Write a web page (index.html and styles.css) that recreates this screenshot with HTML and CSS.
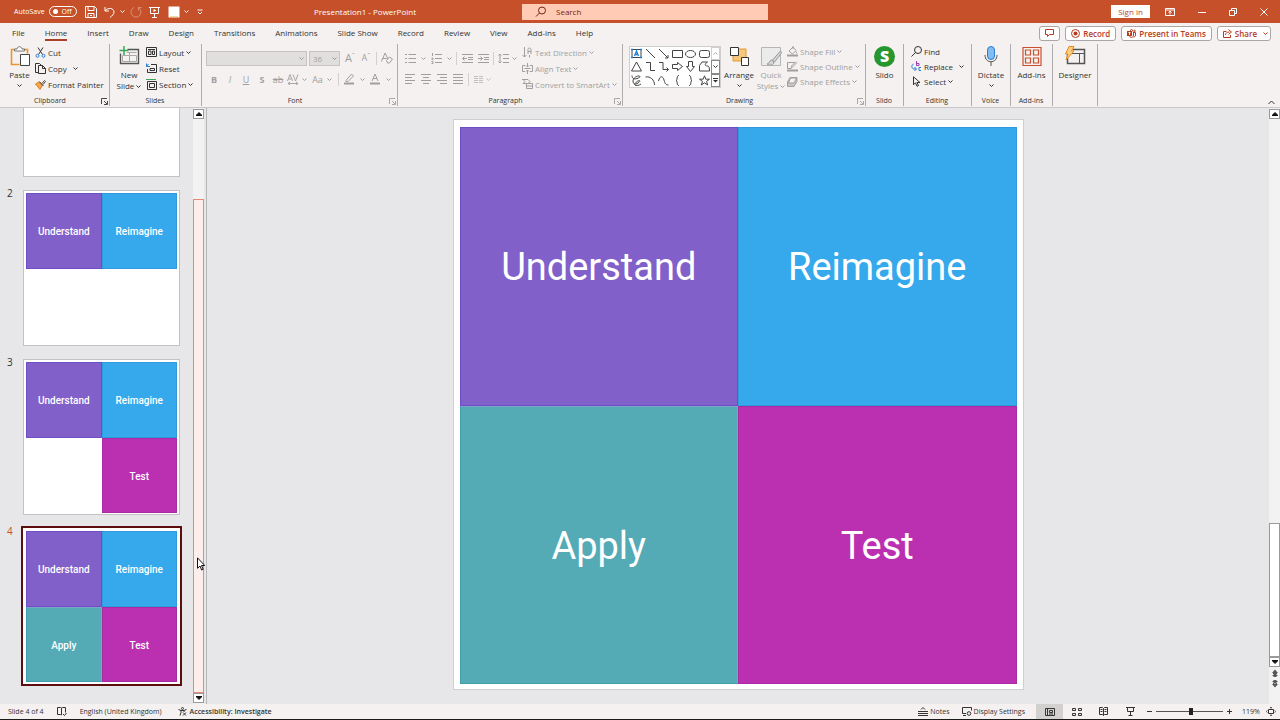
FILE: index.html
```
<!DOCTYPE html>
<html lang="en">

<head>
    <meta charset="UTF-8">
    <meta name="viewport" content="width=device-width, initial-scale=1.0">
    <title>Presentation1 - PowerPoint</title>
    <link rel="stylesheet" href="styles.css">
</head>

<body>
    <svg class="sprite" aria-hidden="true">
        <symbol id="chev" viewBox="0 0 5 5"><path d="M.5 1.5l2 2 2-2" fill="none" stroke="currentColor"/></symbol>
        <symbol id="launch" viewBox="0 0 7 7"><path d="M.5 6V.5H6M3 3l3 3M6.5 3v3.500H3" fill="none" stroke="currentColor" stroke-width=".9"/></symbol>
        <symbol id="up" viewBox="0 0 6 4"><path d="M0 3.500L3 .5l3 3z" fill="currentColor"/></symbol>
        <symbol id="down" viewBox="0 0 6 4"><path d="M0 .5l3 3 3-3z" fill="currentColor"/></symbol>
    </svg>

    <header class="titlebar">
        <div class="quick">
            <label class="autosave">AutoSave <span class="switch"><input type="checkbox">Off</span></label>
            <button aria-label="Save"><svg width="12" height="12" viewBox="0 0 12 12"><path d="M.5.5h9l2 2v9H.5zM3 .5v4h6v-4M3 11.500v-4h6v4M5 9.500h2"/></svg></button>
            <button aria-label="Undo" class="wide"><svg width="12" height="12" viewBox="0 0 12 12"><path d="M1 1v4h4M1 5c3-4 9-3 9 1 0 2-2 4-4 5.500"/></svg><svg width="5" height="5"><use href="#chev"/></svg></button>
            <button aria-label="Redo" class="faded"><svg width="12" height="12" viewBox="0 0 12 12"><path d="M8 1.500a5 5 0 1 1-4 0M8.500 4.500v-3h3"/></svg></button>
            <button aria-label="Start from beginning"><svg width="12" height="12" viewBox="0 0 12 12"><path d="M0 1.500h11M1.500 1.500v6h8v-6M5.500 7.500v4M3 11.500h5"/><path d="M4.500 3l3 1.500-3 1.500z" class="solid"/></svg></button>
            <button aria-label="Fill colour" class="wide"><svg width="12" height="12" viewBox="0 0 12 12"><path d="M.5.5h11v11H.5z" class="solid"/><path d="M2 10.500h8" stroke="#f0dc9a"/></svg><svg width="5" height="5"><use href="#chev"/></svg></button>
            <button aria-label="Customize toolbar"><svg width="6" height="6" viewBox="0 0 6 6"><path d="M.5 1h5M1 3l2 2 2-2"/></svg></button>
            <h1>Presentation1 - PowerPoint</h1>
        </div>
        <label class="search">
            <svg width="12" height="12" viewBox="0 0 12 12"><circle cx="7" cy="4.500" r="3.500"/><path d="M4.500 7L1 10.500"/></svg>
            <input type="search" placeholder="Search" aria-label="Search">
        </label>
        <div class="window">
            <button class="signin">Sign in</button>
            <button aria-label="Ribbon display options"><svg width="10" height="8" viewBox="0 0 10 8"><path d="M.5.5h9v7h-9zM.5 2h9M5 6.500v-3M3.500 4.500L5 3.200l1.500 1.300"/></svg></button>
            <button aria-label="Minimize"><svg width="8" height="8" viewBox="0 0 8 8"><path d="M0 4.500h8"/></svg></button>
            <button aria-label="Restore"><svg width="8" height="8" viewBox="0 0 8 8"><path d="M.5 2.500h5v5h-5zM2.500 2.500v-2h5v5h-2"/></svg></button>
            <button aria-label="Close"><svg width="8" height="8" viewBox="0 0 8 8"><path d="M.5.500l7 7M7.500.500l-7 7"/></svg></button>
        </div>
    </header>

    <nav class="tabs">
        <a href="#">File</a>
        <a href="#" class="active">Home</a>
        <a href="#">Insert</a>
        <a href="#">Draw</a>
        <a href="#">Design</a>
        <a href="#">Transitions</a>
        <a href="#">Animations</a>
        <a href="#">Slide Show</a>
        <a href="#">Record</a>
        <a href="#">Review</a>
        <a href="#">View</a>
        <a href="#">Add-ins</a>
        <a href="#">Help</a>
        <div class="actions">
            <button aria-label="Comments"><svg width="9" height="8" viewBox="0 0 9 8"><path d="M.5.500h8v5h-4l-2 2v-2h-2z"/></svg></button>
            <button><svg width="9" height="9" viewBox="0 0 9 9"><circle cx="4.500" cy="4.500" r="4"/><circle cx="4.500" cy="4.500" r="2" class="solid"/></svg>Record</button>
            <button><svg width="9" height="9" viewBox="0 0 9 9"><path d="M0 2h5v5H0z" class="solid"/><path d="M1.500 3.500h2M2.500 3.500V6" stroke="#fff"/><circle cx="4.500" cy="1.500" r="1"/><circle cx="7.500" cy="2" r=".8"/><path d="M6 3.500h2.500V6c0 1.500-1 2-2 2M2.500 7c.5 2 4 2 4-1V3.500"/></svg>Present in Teams</button>
            <button><svg width="9" height="9" viewBox="0 0 9 9"><path d="M3.500 2.500h-3v6h7V6M2.500 6c0-2 1.500-3 4-3M5.500.500L8.500 3l-3 2.500"/></svg>Share<svg class="split" width="5" height="5"><use href="#chev"/></svg></button>
        </div>
    </nav>

    <div class="ribbon">
        <section class="group clipboard">
            <div class="tools">
                <button class="big"><svg width="22" height="22" viewBox="0 0 22 22"><path d="M7 4.500H2.500v15h8M14 4.500h4.500v4" stroke="#e8962e" stroke-width="1.600"/><path d="M5.500 6V4H8c0-3 5-3 5 0h2.500v2z" fill="#fff" stroke="#777"/><path d="M11.500 9.500h9v11h-9z" fill="#fff" stroke="#444"/></svg>Paste<svg width="5" height="5"><use href="#chev"/></svg></button>
                <div class="rows">
                    <button><svg width="11" height="11" viewBox="0 0 11 11"><path d="M3 .5l4.500 7M8 .5l-4.500 7"/><circle cx="2.500" cy="8.800" r="1.500" stroke="#2b7cd3"/><circle cx="8.500" cy="8.800" r="1.500" stroke="#2b7cd3"/></svg>Cut</button>
                    <button><svg width="11" height="11" viewBox="0 0 11 11"><path d="M3 9.500H.5V.500h4l1.500 1.500M3.500 2.500h4l3 3v5h-7zM7.500 2.500v3h3"/></svg>Copy<svg class="far" width="5" height="5"><use href="#chev"/></svg></button>
                    <button><svg width="11" height="11" viewBox="0 0 11 11"><path d="M.5 5l4-2.500 3 3.500-2.500 4.500z" fill="#f3a64a" stroke="#dd8123"/><path d="M4.500 3l4 4M7 4.500L9.500 1.500l1 1L8 5.500" stroke="#444"/></svg>Format Painter</button>
                </div>
            </div>
            <footer><h2>Clipboard</h2><button aria-label="Clipboard options"><svg width="7" height="7"><use href="#launch"/></svg></button></footer>
        </section>

        <section class="group slides">
            <div class="tools">
                <button class="big"><svg width="22" height="22" viewBox="0 0 22 22"><path d="M2.500 8.500v10h18v-14h-11" stroke="#555" fill="none" stroke-width="1.400"/><path d="M9 7.500h9.500M4.500 10.500h14v6h-14zM11.500 8v8.500" stroke="#aaa"/><path d="M6 1v9M1.500 5.500h9" stroke="#3aa757" stroke-width="1.500"/></svg>New<span>Slide <svg width="5" height="5"><use href="#chev"/></svg></span></button>
                <div class="rows">
                    <button><svg width="11" height="10" viewBox="0 0 11 10"><path d="M.5.500h10v9H.5zM2 2.500h7M2.500 4v3.500h2.500V4zM6.500 4v3.500h2V4z"/></svg>Layout<svg width="5" height="5"><use href="#chev"/></svg></button>
                    <button><svg width="11" height="10" viewBox="0 0 11 10"><path d="M5 1.500h5.500v8h-9V6M4 5.500h4.500v2H4z"/><path d="M.5 3.500l2-2.500M.5 3.500H4M.5 3.500V.500" stroke="#2b7cd3"/></svg>Reset</button>
                    <button><svg width="11" height="11" viewBox="0 0 11 11"><path d="M0 .5h10" stroke="#3aa757"/><path d="M1.500 2.500h9v8h-9zM3.500 4.500h5v4h-5z"/></svg>Section<svg width="5" height="5"><use href="#chev"/></svg></button>
                </div>
            </div>
            <footer><h2>Slides</h2></footer>
        </section>

        <section class="group font">
            <div class="lines off">
                <div class="line">
                    <select class="face" aria-label="Font" disabled><option></option></select>
                    <select class="size" aria-label="Font size" disabled><option>36</option></select>
                    <button disabled class="grow">A<sup>ˆ</sup></button>
                    <button disabled class="grow small">A<sup>ˇ</sup></button>
                    <i class="bar"></i>
                    <button disabled aria-label="Clear formatting"><svg width="12" height="12" viewBox="0 0 12 12"><path d="M.5 9.500L4 1l3 6M1.500 6.500h4M5.500 8.500l3-3.500 3 2-3 4h-2z"/></svg></button>
                </div>
                <div class="line letters">
                    <button disabled><b>B</b></button>
                    <button disabled><em>I</em></button>
                    <button disabled><u>U</u></button>
                    <button disabled><b>S</b></button>
                    <button disabled><s>ab</s></button>
                    <button disabled class="mid" aria-label="Character spacing"><svg width="12" height="11" viewBox="0 0 12 11"><path d="M.5 7L3 .5 5.500 7M1.500 5h3M6 .5L8.500 7 11 .5M1 9.500h10M3 8L1 9.500 3 11M9 8l2 1.500L9 11" stroke-width=".9"/></svg><svg width="5" height="5"><use href="#chev"/></svg></button>
                    <button disabled class="case">Aa<svg width="5" height="5"><use href="#chev"/></svg></button>
                    <i class="bar"></i>
                    <button disabled class="pick" aria-label="Highlight"><svg width="12" height="12" viewBox="0 0 12 12"><path d="M3 7.500l5.500-6.500 2 2L5 8.500H3z"/><path d="M1 10.500h10" stroke-width="2"/></svg><svg width="5" height="5"><use href="#chev"/></svg></button>
                    <button disabled class="pick" aria-label="Font colour"><svg width="12" height="12" viewBox="0 0 12 12"><path d="M3 8l3-7 3 7M4 5.500h4"/><path d="M1 10.500h10" stroke-width="2"/></svg><svg width="5" height="5"><use href="#chev"/></svg></button>
                </div>
            </div>
            <footer class="off"><h2>Font</h2><button aria-label="Font options"><svg width="7" height="7"><use href="#launch"/></svg></button></footer>
        </section>

        <section class="group paragraph">
            <div class="tools off">
                <div class="lines">
                    <div class="line">
                        <button disabled class="pick" aria-label="Bullets"><svg width="11" height="11" viewBox="0 0 11 11"><path d="M3.500 1.500H11M3.500 5.500H11M3.500 9.500H11M0 1.500h2M0 5.500h2M0 9.500h2"/></svg><svg width="5" height="5"><use href="#chev"/></svg></button>
                        <button disabled class="pick" aria-label="Numbering"><svg width="11" height="11" viewBox="0 0 11 11"><path d="M4 1.500h7M4 5.500h7M4 9.500h7M1.500 0v3M.5 5h1.500v1.500H.5M.5 8.500h1.500v2H.5"/></svg><svg width="5" height="5"><use href="#chev"/></svg></button>
                        <i class="bar"></i>
                        <button disabled aria-label="Decrease indent"><svg width="11" height="9" viewBox="0 0 11 9"><path d="M0 .5h11M6 3.500h5M6 5.500h5M0 8.500h11M5 4.500H.5M2.500 2.500l-2 2 2 2"/></svg></button>
                        <button disabled aria-label="Increase indent"><svg width="11" height="9" viewBox="0 0 11 9"><path d="M0 .5h11M6 3.500h5M6 5.500h5M0 8.500h11M0 4.500h4.500M2.500 2.500l2 2-2 2"/></svg></button>
                        <i class="bar"></i>
                        <button disabled class="mid" aria-label="Line spacing"><svg width="11" height="11" viewBox="0 0 11 11"><path d="M5 1.500h6M5 5.500h6M5 9.500h6M2 1v9M.5 2.500L2 1l1.500 1.500M.5 8.500L2 10l1.500-1.500"/></svg><svg width="5" height="5"><use href="#chev"/></svg></button>
                    </div>
                    <div class="line">
                        <button disabled aria-label="Align left"><svg width="11" height="10" viewBox="0 0 11 10"><path d="M0 .5h10M0 3.500h7M0 6.500h10M0 9.500h7"/></svg></button>
                        <button disabled aria-label="Centre"><svg width="11" height="10" viewBox="0 0 11 10"><path d="M0 .5h10M2 3.500h6M0 6.500h10M2 9.500h6"/></svg></button>
                        <button disabled aria-label="Align right"><svg width="11" height="10" viewBox="0 0 11 10"><path d="M0 .5h10M3 3.500h7M0 6.500h10M3 9.500h7"/></svg></button>
                        <button disabled aria-label="Justify"><svg width="11" height="10" viewBox="0 0 11 10"><path d="M0 .5h10M0 3.500h10M0 6.500h10M0 9.500h10"/></svg></button>
                        <i class="bar"></i>
                        <button disabled class="mid pale" aria-label="Columns"><svg width="9" height="7" viewBox="0 0 9 7"><path d="M0 .5h4M5 .5h4M0 2.500h4M5 2.500h4M0 4.500h4M5 4.500h4M0 6.500h4M5 6.500h4"/></svg><svg width="5" height="5"><use href="#chev"/></svg></button>
                    </div>
                </div>
                <div class="rows">
                    <button disabled><svg width="11" height="11" viewBox="0 0 11 11"><path d="M2.500 0v10M.5 8l2 2 2-2M6 7V2.500c0-2 3-2 3 0V7M6 4.500h3M7.500 8v2.500"/></svg>Text Direction<svg width="5" height="5"><use href="#chev"/></svg></button>
                    <button disabled><svg width="11" height="11" viewBox="0 0 11 11"><path d="M3 2.500H.5v6H3M8 2.500h2.500v6H8M5.500 0v4M4 2.500l1.500 1.500L7 2.500M5.500 11V7M4 8.500L5.500 7 7 8.500M2.500 5.500h6"/></svg>Align Text<svg width="5" height="5"><use href="#chev"/></svg></button>
                    <button disabled><svg width="11" height="10" viewBox="0 0 11 10"><path d="M0 .5h6l2 2-2 2H1l2-2-2-2M4.500 4.500h6v5h-6zM4.500 7h6"/></svg>Convert to SmartArt<svg width="5" height="5"><use href="#chev"/></svg></button>
                </div>
            </div>
            <footer class="off"><h2>Paragraph</h2><button aria-label="Paragraph options"><svg width="7" height="7"><use href="#launch"/></svg></button></footer>
        </section>

        <section class="group drawing">
            <div class="tools">
                <div class="gallery">
                    <div class="shapes">
                        <button aria-label="Text box"><svg width="11" height="11" viewBox="0 0 11 11"><path d="M1 1.500h9v8H1z"/><path d="M3.500 8L5.500 3l2 5M4.200 6.500h2.600M0 1.500h2M9 1.500h2M0 9.500h2M9 9.500h2" stroke="#1b7fd6" stroke-width="1.300"/></svg></button>
                        <button aria-label="Line"><svg width="11" height="11" viewBox="0 0 11 11"><path d="M1 1l9 9"/></svg></button>
                        <button aria-label="Arrow"><svg width="11" height="11" viewBox="0 0 11 11"><path d="M1 1l9 9M10 7v3H7"/></svg></button>
                        <button aria-label="Rectangle"><svg width="11" height="11" viewBox="0 0 11 11"><path d="M.5 2.500h10v7H.5z"/></svg></button>
                        <button aria-label="Oval"><svg width="11" height="11" viewBox="0 0 11 11"><ellipse cx="5.500" cy="6" rx="5" ry="3.500"/></svg></button>
                        <button aria-label="Rounded rectangle"><svg width="11" height="11" viewBox="0 0 11 11"><rect x=".5" y="2.500" width="10" height="7" rx="2"/></svg></button>
                        <button aria-label="Triangle"><svg width="11" height="11" viewBox="0 0 11 11"><path d="M5.500 1l5 9H.5z"/></svg></button>
                        <button aria-label="Elbow"><svg width="11" height="11" viewBox="0 0 11 11"><path d="M1 1.500h4.500v8H10"/></svg></button>
                        <button aria-label="Elbow arrow"><svg width="11" height="11" viewBox="0 0 11 11"><path d="M1 1.500h4v7h5.500M8.500 6.500l2 2-2 2"/></svg></button>
                        <button aria-label="Right arrow"><svg width="11" height="11" viewBox="0 0 11 11"><path d="M.5 3.500h5v-2l5 4-5 4v-2h-5z"/></svg></button>
                        <button aria-label="Down arrow"><svg width="11" height="11" viewBox="0 0 11 11"><path d="M3.500.500v5h-2l4 5 4-5h-2v-5z"/></svg></button>
                        <button aria-label="Freeform"><svg width="11" height="11" viewBox="0 0 11 11"><path d="M.5 10V4.500L3 1h5.500c-3 2-3 4 0 4 1.500 0 2 2 2 5z"/></svg></button>
                        <button aria-label="Scribble"><svg width="11" height="11" viewBox="0 0 11 11"><path d="M1 .5c0 3 2 4 5 3s4-2 2-2.500S2 3 2 6s2 4 5 2 2-3 0-2-4 3-3 4 4 .5 6-1"/></svg></button>
                        <button aria-label="Arc"><svg width="11" height="11" viewBox="0 0 11 11"><path d="M.5 2c5-1 9 3 9 8"/></svg></button>
                        <button aria-label="Curve"><svg width="11" height="11" viewBox="0 0 11 11"><path d="M.5 6C2 0 5 1 6 5s2 5 4.500 5"/></svg></button>
                        <button aria-label="Left brace"><svg width="11" height="11" viewBox="0 0 11 11"><path d="M7 .5C4 .5 6 5.500 4 5.500c2 0 0 5 3 5"/></svg></button>
                        <button aria-label="Right brace"><svg width="11" height="11" viewBox="0 0 11 11"><path d="M4 .5c3 0 1 5 3 5-2 0 0 5-3 5"/></svg></button>
                        <button aria-label="Star"><svg width="11" height="11" viewBox="0 0 11 11"><path d="M5.500.8l1.300 3.400h3.700L7.500 6.400l1.200 3.600-3.200-2.200L2.300 10l1.200-3.600L.5 4.200h3.700z"/></svg></button>
                    </div>
                    <div class="scrolls">
                        <button class="dim" aria-label="Previous row"><svg width="5" height="5" viewBox="0 0 5 5"><path d="M.5 3.500l2-2 2 2"/></svg></button>
                        <button aria-label="Next row"><svg width="5" height="5"><use href="#chev"/></svg></button>
                        <button aria-label="More shapes"><svg width="5" height="5" viewBox="0 0 5 5"><path d="M0 .5h5"/><path d="M0 2l2.500 2.500L5 2z" class="solid"/></svg></button>
                    </div>
                </div>
                <button class="big arrange"><svg width="22" height="22" viewBox="0 0 22 22"><path d="M5 4h13v12H5z" fill="#f8c77e" stroke="#e8962e"/><path d="M2.500 2.500h8v8h-8zM13.500 12.500h7v8h-7z" fill="#fff" stroke="#333"/></svg>Arrange<svg width="5" height="5"><use href="#chev"/></svg></button>
                <button class="big dim" disabled><svg width="22" height="22" viewBox="0 0 22 22"><path d="M1.500 2.500h19v18h-19z" fill="#ebebeb" stroke="#b5b5b5"/><path d="M20.500 6l-8 9M20.500 6l1 2-7 9-2-2M12 15c-3 0-2 4-5 4 3 2 7 1 7-2z" fill="#d5d5d5" stroke="#999"/></svg>Quick<span>Styles <svg width="5" height="5"><use href="#chev"/></svg></span></button>
                <div class="rows tight off">
                    <button disabled><svg width="11" height="11" viewBox="0 0 11 11"><path d="M2 5l4-4 3 3.500L5.500 8zM9 5.500l1 2M6 0v3"/><path d="M0 9.500h11" stroke-width="2"/></svg>Shape Fill<svg width="5" height="5"><use href="#chev"/></svg></button>
                    <button disabled><svg width="11" height="11" viewBox="0 0 11 11"><path d="M8 1.500H.5v6H4M4 7.500l6-6M4 7.500l1-3 4-4"/><path d="M0 9.500h11" stroke-width="2"/></svg>Shape Outline<svg width="5" height="5"><use href="#chev"/></svg></button>
                    <button disabled><svg width="11" height="10" viewBox="0 0 11 10"><path d="M3 .5h7v4l-3 5H.5V5z" fill="#c5c5c5"/><path d="M3.500 1h6L7 6H1.500z" fill="#f4f2f1"/></svg>Shape Effects<svg width="5" height="5"><use href="#chev"/></svg></button>
                </div>
            </div>
            <footer class="off"><h2>Drawing</h2><button aria-label="Drawing options"><svg width="7" height="7"><use href="#launch"/></svg></button></footer>
        </section>

        <section class="group slido">
            <button class="big"><span class="slido-logo">S</span>Slido</button>
            <footer><h2>Slido</h2></footer>
        </section>

        <section class="group editing">
            <div class="rows tight">
                <button><svg width="11" height="11" viewBox="0 0 11 11"><circle cx="7" cy="4" r="3.500"/><path d="M4.500 6.500L.5 10.500"/></svg>Find</button>
                <button><svg width="11" height="11" viewBox="0 0 11 11"><path d="M5.500 0v4.500h2.500v-2H5.500" stroke="#a33bb5"/><path d="M10 6.500H8v3h2M2.500 3C0 4 .5 8 3 8h2M3.500 6L5.500 8l-2 2" stroke="#2b7cd3"/></svg>Replace<svg class="far" width="5" height="5"><use href="#chev"/></svg></button>
                <button><svg width="11" height="11" viewBox="0 0 11 11"><path d="M2.500.800v8l2-2 1.500 3.500 1.500-.8L6 6.500h3z"/></svg>Select<svg width="5" height="5"><use href="#chev"/></svg></button>
            </div>
            <footer><h2>Editing</h2></footer>
        </section>

        <section class="group voice">
            <button class="big"><svg width="22" height="22" viewBox="0 0 22 22"><path d="M5 10c0 9 12 9 12 0M11 17v4" stroke="#555"/><rect x="7.500" y="1.500" width="7" height="13" rx="3.500" fill="#83bdf0" stroke="#2b7cd3"/></svg>Dictate<svg width="5" height="5"><use href="#chev"/></svg></button>
            <footer><h2>Voice</h2></footer>
        </section>

        <section class="group addins">
            <button class="big"><svg width="22" height="22" viewBox="0 0 22 22"><path d="M2 2.500h18v18H2zM4.500 5h5v5h-5zM12.500 5h5v5h-5zM4.500 13h5v5h-5zM12.500 13h5v5h-5z" stroke="#c9502c" stroke-width="1.200"/></svg>Add-ins</button>
            <footer><h2>Add-ins</h2></footer>
        </section>

        <section class="group designer">
            <button class="big"><svg width="22" height="22" viewBox="0 0 22 22"><path d="M3.500 9v9.500h17v-14H9" stroke="#555" stroke-width="1.500"/><path d="M8 8.500h12M15.500 9v9" stroke="#555"/><path d="M5 1.500h5L7.500 6H10l-8 9 2-6H1.500z" fill="#fbcf7e" stroke="#e58a1f"/></svg>Designer</button>
            <footer></footer>
        </section>

        <button class="collapse" aria-label="Collapse ribbon"><svg width="7" height="5" viewBox="0 0 7 5"><path d="M.5 4l3-3 3 3"/></svg></button>
    </div>

    <main>
        <aside class="panel">
            <ol class="thumbs">
                <li><span></span><div class="thumb"></div></li>
                <li><span>2</span>
                    <div class="thumb">
                        <div class="tile understand">Understand</div>
                        <div class="tile reimagine">Reimagine</div>
                    </div>
                </li>
                <li><span>3</span>
                    <div class="thumb">
                        <div class="tile understand">Understand</div>
                        <div class="tile reimagine">Reimagine</div>
                        <div class="tile test">Test</div>
                    </div>
                </li>
                <li class="selected"><span>4</span>
                    <div class="thumb">
                        <div class="tile understand">Understand</div>
                        <div class="tile reimagine">Reimagine</div>
                        <div class="tile apply">Apply</div>
                        <div class="tile test">Test</div>
                    </div>
                </li>
            </ol>
            <div class="scroll red">
                <button aria-label="Scroll up"><svg width="6" height="4"><use href="#up"/></svg></button>
                <div class="track"><div class="handle"></div></div>
                <button aria-label="Scroll down"><svg width="6" height="4"><use href="#down"/></svg></button>
            </div>
            <svg class="cursor" width="8" height="14" viewBox="0 0 8 14"><path d="M.5.800v10.500L3 9l1.600 4 1.600-.7L4.500 8.500h3.200z" fill="#fff" stroke="#111"/></svg>
        </aside>

        <div class="stage">
            <div class="slide">
                <div class="tile understand">Understand</div>
                <div class="tile reimagine">Reimagine</div>
                <div class="tile apply">Apply</div>
                <div class="tile test">Test</div>
            </div>
        </div>

        <div class="scroll right">
            <button aria-label="Scroll up"><svg width="6" height="4"><use href="#up"/></svg></button>
            <div class="track"><div class="handle"></div></div>
            <button aria-label="Scroll down"><svg width="6" height="4"><use href="#down"/></svg></button>
            <button class="jump" aria-label="Previous slide"><svg width="6" height="8" viewBox="0 0 6 8"><path d="M0 4l3-3.500L6 4zM1 4h4v1H1zM0 7l3-3 3 3zM1.500 7h3v1h-3z" class="solid"/></svg></button>
            <button class="jump" aria-label="Next slide"><svg width="6" height="8" viewBox="0 0 6 8"><path d="M0 4l3 3.500L6 4zM1 3h4v1H1zM0 1l3 3 3-3zM1.500 0h3v1h-3z" class="solid"/></svg></button>
        </div>
    </main>

    <footer class="status">
        <span>Slide 4 of 4</span>
        <button aria-label="Spelling"><svg width="10" height="9" viewBox="0 0 10 9"><path d="M4.500 8L3.500 7.500h-3v-7h3l1 .5 1-.5h3v5M4.500 1v7M6 7l1.500 1.500L9.500 6"/></svg></button>
        <button>English (United Kingdom)</button>
        <button class="access"><svg width="9" height="9" viewBox="0 0 9 9"><circle cx="4.500" cy="1.500" r="1"/><path d="M.5 2.500l2.500 1v2L2 8.500M8.500 2.500L6 3.500V5M3 3.500h3M5 5.500l3 3M8 5.500l-3 3"/></svg>Accessibility: Investigate</button>
        <div class="views">
            <button><svg width="10" height="9" viewBox="0 0 10 9"><path d="M0 4.500h10M0 6.500h10M0 8.500h10M3 2.500L5 .5l2 2"/></svg>Notes</button>
            <button class="display"><svg width="10" height="9" viewBox="0 0 10 9"><path d="M4 6.500H.5v-6h9v3M1 8.500h3"/><circle cx="7" cy="6.500" r="1.800"/></svg>Display Settings</button>
            <button class="view on" aria-label="Normal"><svg width="10" height="8" viewBox="0 0 10 8"><path d="M.5.500h9v7h-9zM2.500.500v7M4.500 2.500h3v2h-3zM4 6h4"/></svg></button>
            <button class="view" aria-label="Slide sorter"><svg width="10" height="8" viewBox="0 0 10 8"><path d="M.5.500h3v2h-3zM6.500.500h3v2h-3zM.5 5.500h3v2h-3zM6.500 5.500h3v2h-3z"/></svg></button>
            <button class="view" aria-label="Reading view"><svg width="10" height="9" viewBox="0 0 10 9"><path d="M4.500 1.500l-1-1h-3v7h3l1 1 1-1h3v-7h-3zM4.500 1.500v7M1.500 2.500h2M1.500 4.500h2M5.500 2.500h2M5.500 4.500h2"/></svg></button>
            <button class="view" aria-label="Slide show"><svg width="10" height="9" viewBox="0 0 10 9"><path d="M0 .5h9M1.500.500v4h6v-4M4.500 5v3M2.500 8.500h4"/></svg></button>
            <button class="zoom" aria-label="Zoom out"><svg width="5" height="5" viewBox="0 0 5 5"><path d="M0 2.500h5"/></svg></button>
            <input type="range" min="0" max="100" value="53" aria-label="Zoom">
            <button class="zoom" aria-label="Zoom in"><svg width="5" height="5" viewBox="0 0 5 5"><path d="M0 2.500h5M2.500 0v5"/></svg></button>
            <button class="percent">119%</button>
            <button class="fit" aria-label="Fit to window"><svg width="10" height="9" viewBox="0 0 10 9"><path d="M2.500 2.500h5v4h-5zM4 1.200L5 .3l1 .9M4 7.800l1 .9 1-.9M1.200 3.500L.3 4.500l.9 1M8.800 3.500l.9 1-.9 1"/></svg></button>
        </div>
    </footer>
</body>

</html>
```
FILE: styles.css
```
* {
    margin: 0;
    padding: 0;
    box-sizing: border-box;
}

body {
    display: flex;
    flex-direction: column;
    height: 100vh;
    overflow: hidden;
    font-family: "Open Sans", "Noto Sans", sans-serif;
    font-size: 8px;
    color: #333;
    background-color: #f4f1f0;
}

button,
input,
select {
    font: inherit;
    color: inherit;
    background: none;
    border: none;
}

button {
    display: flex;
    align-items: center;
    justify-content: center;
    white-space: nowrap;
}

svg {
    flex: none;
    fill: none;
    stroke: currentColor;
}

svg .solid {
    fill: currentColor;
    stroke: none;
}

.sprite {
    display: none;
}

/* title bar */
.titlebar {
    display: grid;
    grid-template-columns: 522fr 246fr 512fr;
    align-items: center;
    height: 23px;
    color: white;
    background-color: #c5502a;
}

.quick {
    display: flex;
    align-items: center;
    padding-left: 14px;
}

.quick button {
    width: 12px;
    margin-right: 7px;
}

.quick .wide {
    width: 21px;
    gap: 4px;
    margin-right: 5px;
}

.quick .faded {
    opacity: 0.35;
}

.autosave {
    display: flex;
    align-items: center;
    gap: 4px;
    width: 64px;
    margin-right: 7px;
    font-size: 7px;
    font-weight: 500;
    white-space: nowrap;
}

.switch {
    display: flex;
    align-items: center;
    gap: 4px;
    height: 11px;
    padding: 0 4px 0 3px;
    border: 1px solid white;
    border-radius: 6px;
}

.switch input {
    appearance: none;
    width: 5px;
    height: 5px;
    border-radius: 50%;
    background-color: white;
}

h1 {
    margin: 0 106px 0 auto;
    font-size: 8px;
    font-weight: 500;
    white-space: nowrap;
}

.search {
    display: flex;
    align-items: center;
    gap: 9px;
    height: 16px;
    padding-left: 13px;
    color: #7a2410;
    background-color: #ffcbb4;
}

.search input {
    flex: 1;
    min-width: 0;
    outline: none;
}

.search input::placeholder {
    color: #7a2410;
}

.window {
    display: flex;
    align-items: center;
    justify-content: flex-end;
    padding-right: 12px;
}

.window button {
    width: 8px;
    margin-left: 23px;
}

.window .signin {
    width: 39px;
    height: 13px;
    color: #b7472a;
    background-color: white;
}

.window .signin + button {
    width: 10px;
    margin-left: 15px;
}

/* tabs */
.tabs {
    display: flex;
    align-items: center;
    gap: 20px;
    height: 20px;
    padding: 0 9px 0 12px;
}

.tabs a {
    height: 16px;
    line-height: 16px;
    color: #333;
    font-weight: 500;
    text-decoration: none;
    white-space: nowrap;
}

.tabs .active {
    border-bottom: 2px solid #a8402a;
}

.actions {
    display: flex;
    gap: 5px;
    margin-left: auto;
}

.actions button {
    gap: 3px;
    height: 15px;
    padding: 0 5px;
    color: #b83b1d;
    font-weight: 600;
    background-color: white;
    border: 1px solid #a9a6a5;
    border-radius: 3px;
}

.actions .split {
    margin-left: 3px;
    margin-right: -3px;
}

/* ribbon */
.ribbon {
    display: flex;
    height: 65px;
    padding-top: 1px;
    border-bottom: 1px solid #c9c7c7;
}

.group {
    display: flex;
    flex-direction: column;
    justify-content: space-between;
    height: 62px;
    border-right: 1px solid #aeacac;
}

.group footer {
    display: flex;
    align-items: center;
    height: 10px;
    padding-right: 1px;
}

.group footer button {
    width: 8px;
}

.group h2 {
    flex: 1;
    font-size: 7px;
    font-weight: 500;
    line-height: 8px;
    text-align: center;
}

.tools {
    display: flex;
}

.big {
    flex-direction: column;
    justify-content: flex-start;
    line-height: 11px;
    padding-top: 1px;
}

.big > svg:first-child {
    margin-bottom: 2px;
}

.big > svg:last-child:not(:first-child) {
    margin-top: 3px;
}

.big.dim,
.off button,
.off select {
    color: #a19f9e;
}

.rows {
    display: flex;
    flex-direction: column;
    align-items: flex-start;
}

.rows button {
    gap: 2px;
    height: 16px;
}

.rows.tight button {
    height: 15px;
}

.rows .far {
    margin-left: 4px;
}

.lines {
    display: flex;
    flex-direction: column;
    gap: 5px;
    padding-top: 6px;
}

.line {
    display: flex;
    align-items: center;
    height: 16px;
}

.line button {
    width: 16px;
    height: 16px;
}

.line .mid {
    width: 22px;
    gap: 3px;
}

.line .pick {
    width: 26px;
    gap: 5px;
}

.line .case {
    width: 28px;
    gap: 4px;
    font-size: 9px;
}

.line .grow {
    align-items: flex-start;
    font-size: 11px;
    line-height: 16px;
}

.line .grow sup {
    font-size: 8px;
    line-height: 10px;
}

.line .small {
    font-size: 9px;
}

.line .pale {
    opacity: 0.6;
}

.letters {
    font-size: 9px;
}

.bar {
    width: 1px;
    height: 13px;
    margin: 0 2px;
    background-color: #d3d1d0;
}

select {
    appearance: none;
    height: 15px;
    padding-left: 3px;
    border: 1px solid #c6c4c3;
    background: #e1dfde url("data:image/svg+xml,%3Csvg xmlns='http://www.w3.org/2000/svg' width='5' height='5'%3E%3Cpath d='M.5 1.5l2 2 2-2' fill='none' stroke='%23999'/%3E%3C/svg%3E") no-repeat right 2px center;
    opacity: 1;
}

.face {
    width: 101px;
    margin-right: 2px;
}

.size {
    width: 31px;
    margin-right: 2px;
}

.clipboard {
    width: 110px;
}

.clipboard .big {
    width: 27px;
    margin-left: 6px;
    margin-right: 2px;
}

.slides {
    width: 92px;
}

.slides .big {
    width: 34px;
    margin-left: 2px;
}

.font {
    width: 196px;
}

.font .lines {
    padding-left: 4px;
}

.paragraph {
    width: 225px;
}

.paragraph .lines {
    width: 122px;
    padding-left: 4px;
}

.paragraph .rows {
    margin-left: 2px;
}

.drawing {
    width: 243px;
}

.gallery {
    display: flex;
    width: 92px;
    height: 42px;
    margin: 2px 3px 0 6px;
    border: 1px solid #d0cecd;
    background-color: white;
}

.shapes {
    display: grid;
    grid-template-columns: repeat(6, 1fr);
    flex: 1;
    color: #444;
}

.scrolls {
    display: grid;
    width: 9px;
}

.scrolls button {
    border: 1px solid #8b8988;
}

.scrolls .dim {
    color: #aaa;
    border-color: #d0cecd;
}

.arrange {
    width: 30px;
}

.arrange + .big {
    width: 34px;
}

.drawing .rows {
    margin-left: -1px;
}

.slido {
    width: 38px;
}

.slido-logo {
    width: 21px;
    height: 21px;
    margin: 1px 0 2px;
    border-radius: 50%;
    background-color: #27962f;
    color: white;
    font-size: 16px;
    font-weight: 800;
    line-height: 21px;
}

.editing {
    width: 68px;
}

.editing .rows {
    padding-left: 7px;
}

.voice {
    width: 39px;
}

.addins {
    width: 42px;
}

.designer {
    width: 45px;
}

.collapse {
    width: 7px;
    margin: auto 5px 2px auto;
}

/* work area */
main {
    display: flex;
    flex: 1;
    min-height: 0;
    background-color: #e7e6e8;
}

.panel {
    position: relative;
    display: flex;
    width: 207px;
    padding-right: 2px;
    border-right: 1px solid #b9b8b9;
}

.thumbs {
    display: flex;
    flex: 1;
    flex-direction: column;
    justify-content: flex-end;
    gap: 13px;
    padding: 0 0 20px 7px;
    overflow: hidden;
    list-style: none;
}

.thumbs li {
    display: flex;
    flex: none;
}

.thumbs li > span {
    width: 16px;
    margin-top: -4px;
    font-size: 10px;
}

.thumb {
    display: grid;
    grid-template: 1fr 1fr / 1fr 1fr;
    width: 157px;
    height: 156px;
    padding: 2px 2px 1px;
    border: 1px solid #c3c2c4;
    background-color: white;
    font-size: 10px;
    font-weight: 500;
}

.selected > span {
    color: #c5502a;
}

.selected .thumb {
    border-color: white;
    outline: 2px solid #5c0d0d;
}

.tile {
    display: flex;
    align-items: center;
    justify-content: center;
    padding-top: 2px;
    color: white;
    font-family: Roboto, sans-serif;
    border: 1px solid;
}

.understand {
    background-color: #8160ca;
    border-color: #6f4dc4;
}

.reimagine {
    background-color: #35a9ec;
    border-color: #2f9bdd;
}

.apply {
    background-color: #54aab5;
    border-color: #7ba4c8 #7ba4c8 #3fa0ac #3fa0ac;
}

.test {
    grid-column: 2;
    background-color: #ba30b0;
    border-color: #a92aa3;
}

.scroll {
    display: flex;
    flex-direction: column;
    width: 11px;
    padding: 1px 0;
    background-color: #f3f2f3;
    color: #111;
}

.scroll button {
    height: 10px;
    border: 1px solid #999;
    background-color: white;
}

.track {
    display: flex;
    flex: 1;
    flex-direction: column;
    justify-content: flex-end;
}

.handle {
    border: 1px solid #999;
    background-color: white;
}

.red .handle {
    height: 86%;
    border-color: #e58a78;
    background-color: #fdeeeb;
}

.scroll.right {
    padding-bottom: 15px;
}

.right .handle {
    height: 25%;
}

.scroll .jump {
    height: 11px;
    border: none;
    background: none;
    color: #555;
}

.cursor {
    position: absolute;
    left: 197px;
    top: 449px;
}

.stage {
    display: flex;
    flex: 1;
    justify-content: center;
    min-width: 0;
    padding: 11px 0 14px;
}

.slide {
    display: grid;
    grid-template: 1fr 1fr / 1fr 1fr;
    height: 100%;
    aspect-ratio: 1;
    padding: 7px 6px 5px;
    border: 1px solid #cfced0;
    background-color: white;
    font-size: 38px;
}

/* status bar */
.status {
    display: flex;
    align-items: center;
    height: 16px;
    padding-left: 8px;
    border-bottom: 1px solid #1b1b1b;
    font-size: 7px;
    font-weight: 500;
}

.status > button {
    margin-left: 13px;
}

.status .access {
    gap: 3px;
    margin-left: 16px;
    font-weight: 600;
}

.views {
    display: flex;
    align-items: center;
    height: 100%;
    margin-left: auto;
    padding-right: 4px;
}

.views button {
    gap: 2px;
}

.views .display {
    margin: 0 11px 0 12px;
}

.views .view {
    width: 27px;
    height: 100%;
}

.views .on {
    background-color: #d3d1d0;
}

.views .zoom {
    width: 7px;
}

.views .view + .zoom {
    margin-left: 2px;
}

.views input {
    appearance: none;
    width: 67px;
    height: 7px;
    margin: 0 3px;
    background: linear-gradient(#555, #555) center / 100% 1px no-repeat;
}

.views input::-webkit-slider-thumb {
    appearance: none;
    width: 4px;
    height: 7px;
    background-color: #222;
}

.percent {
    width: 30px;
    margin-left: 3px;
}
```
